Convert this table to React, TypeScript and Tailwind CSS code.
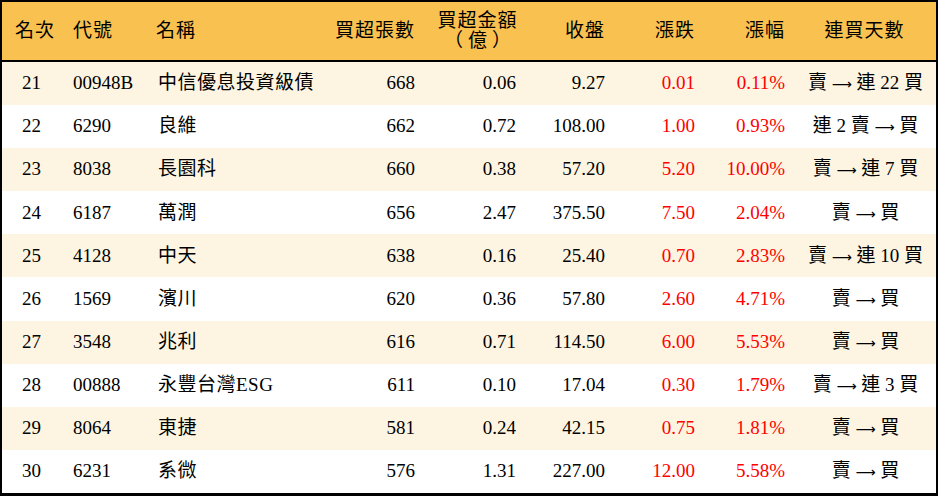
const rows = [
  { rank: 21, code: "00948B", name: "中信優息投資級債", vol: 668, amt: "0.06", close: "9.27", chg: "0.01", pct: "0.11%", days: "賣 → 連 22 買" },
  { rank: 22, code: "6290", name: "良維", vol: 662, amt: "0.72", close: "108.00", chg: "1.00", pct: "0.93%", days: "連 2 賣 → 買" },
  { rank: 23, code: "8038", name: "長園科", vol: 660, amt: "0.38", close: "57.20", chg: "5.20", pct: "10.00%", days: "賣 → 連 7 買" },
  { rank: 24, code: "6187", name: "萬潤", vol: 656, amt: "2.47", close: "375.50", chg: "7.50", pct: "2.04%", days: "賣 → 買" },
  { rank: 25, code: "4128", name: "中天", vol: 638, amt: "0.16", close: "25.40", chg: "0.70", pct: "2.83%", days: "賣 → 連 10 買" },
  { rank: 26, code: "1569", name: "濱川", vol: 620, amt: "0.36", close: "57.80", chg: "2.60", pct: "4.71%", days: "賣 → 買" },
  { rank: 27, code: "3548", name: "兆利", vol: 616, amt: "0.71", close: "114.50", chg: "6.00", pct: "5.53%", days: "賣 → 買" },
  { rank: 28, code: "00888", name: "永豐台灣ESG", vol: 611, amt: "0.10", close: "17.04", chg: "0.30", pct: "1.79%", days: "賣 → 連 3 買" },
  { rank: 29, code: "8064", name: "東捷", vol: 581, amt: "0.24", close: "42.15", chg: "0.75", pct: "1.81%", days: "賣 → 買" },
  { rank: 30, code: "6231", name: "系微", vol: 576, amt: "1.31", close: "227.00", chg: "12.00", pct: "5.58%", days: "賣 → 買" },
];

const cols = "grid grid-cols-[64px_84px_180px_95px_101px_89px_90px_90px_141px]";

// 箭頭用長一點的字形
const Days = ({ text }: { text: string }) => {
  const parts = text.split("→");
  return (
    <div className="text-center whitespace-pre">
      {parts[0]}
      {parts.length > 1 && (
        <>
          <span className="text-[14px]" style={{ fontFamily: '"DejaVu Sans", sans-serif' }}>⟶</span>
          {parts[1]}
        </>
      )}
    </div>
  );
};

export default function App() {
  return (
    <div
      className="w-[938px] h-[496px] flex flex-col border-t-2 border-l-2 border-r-2 border-b-[3px] border-black text-[19px] text-black"
      style={{ fontFamily: '"Liberation Serif", "Noto Sans CJK TC", serif' }}
    >
      {/* header */}
      <div className={`${cols} h-[60px] bg-[#f8c150] border-b-2 border-black items-center leading-[20px]`}>
        <div className="pl-[13px] tracking-[1px]">名次</div>
        <div className="pl-[7px] tracking-[1px]">代號</div>
        <div className="pl-[6px] tracking-[1px]">名稱</div>
        <div className="text-right pr-[10px] tracking-[1px]">買超張數</div>
        <div className="text-center pl-[4px] tracking-[1px]">
          <div>買超金額</div>
          <div className="tracking-[5px] pl-[5px]">（億）</div>
        </div>
        <div className="text-right pr-[10px] tracking-[1px]">收盤</div>
        <div className="text-right pr-[10px] tracking-[1px]">漲跌</div>
        <div className="text-right pr-[10px] tracking-[1px]">漲幅</div>
        <div className="text-center pr-[2px] tracking-[1px]">連買天數</div>
      </div>

      {/* body */}
      <div className="flex-1 flex flex-col">
        {rows.map((r, i) => (
          <div
            key={r.rank}
            className={`${cols} flex-1 items-center ${i % 2 === 0 ? "bg-[#fdf5e2]" : "bg-white"}`}
          >
            <div className="pl-[20px]">{r.rank}</div>
            <div className="pl-[7px]">{r.code}</div>
            <div className="pl-[8px] tracking-[0.5px]">{r.name}</div>
            <div className="text-right pr-[10px]">{r.vol}</div>
            <div className="text-right pr-[10px]">{r.amt}</div>
            <div className="text-right pr-[10px]">{r.close}</div>
            <div className="text-right pr-[10px] text-[#ff0000]">{r.chg}</div>
            <div className="text-right pr-[10px] text-[#ff0000]">{r.pct}</div>
            <Days text={r.days} />
          </div>
        ))}
      </div>
    </div>
  );
}
